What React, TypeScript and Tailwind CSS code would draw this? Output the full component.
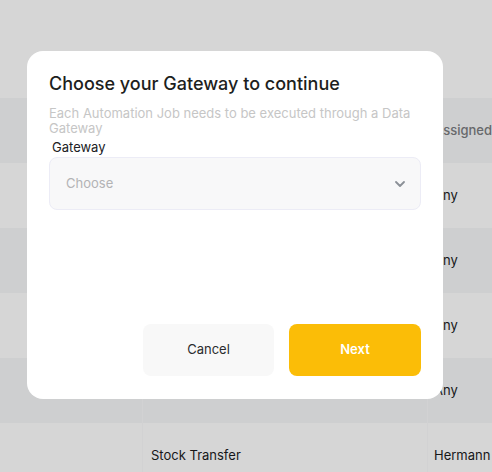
import { ChevronDown } from "lucide-react";

const rows = [
  { type: "", name: "", owner: "Any" },
  { type: "", name: "", owner: "Any" },
  { type: "", name: "", owner: "Any" },
  { type: "", name: "", owner: "Any" },
  { type: "", name: "Stock Transfer", owner: "Hermann" },
];

const App = () => {
  return (
    <div className="relative h-[472px] w-[492px] overflow-hidden bg-white font-['Inter',sans-serif]">
      {/* page behind */}
      <div className="h-[98px] w-full bg-white" />
      <div className="flex h-[65px] bg-[#f6f7f8] text-[13px] font-medium text-[#7b7d80]">
        <div className="w-[142px] shrink-0" />
        <div className="w-[285px] shrink-0 border-l border-[#fbfbfc]" />
        <div className="flex flex-1 items-center border-l border-[#fbfbfc] pl-[6px] whitespace-nowrap">
          Assigned
        </div>
      </div>
      {rows.map((r, i) => (
        <div
          key={i}
          className={
            i % 2 === 0
              ? "flex h-[65px] bg-white text-[13px] text-[#1b1c1e]"
              : "flex h-[65px] bg-[#f6f7f8] text-[13px] text-[#1b1c1e]"
          }
        >
          <div className="flex w-[142px] shrink-0 items-center pl-[9px]">{r.type}</div>
          <div className="flex w-[285px] shrink-0 items-center border-l border-[#fbfbfc] pl-[8px] whitespace-nowrap">
            {r.name}
          </div>
          <div className="flex flex-1 items-center border-l border-[#fbfbfc] pl-[6px] whitespace-nowrap">
            {r.owner}
          </div>
        </div>
      ))}

      {/* overlay */}
      <div className="absolute inset-0 bg-black/[0.16]" />

      {/* modal */}
      <div className="absolute left-[27px] top-[51px] flex h-[348px] w-[416px] flex-col rounded-[16px] bg-white px-[22px] pb-[23px] pt-[21px]">
        <h2 className="text-[18px] font-medium leading-[24px] text-[#1d1e20]">
          Choose your Gateway to continue
        </h2>
        <p className="mt-[10px] pr-[4px] text-[13px] leading-[15px] text-[#c6c6c6]">
          Each Automation Job needs to be executed through a Data Gateway
        </p>
        <label className="mt-[3px] pl-[3px] text-[13px] leading-[16px] text-[#202124]">
          Gateway
        </label>
        <div className="mt-[2px] flex h-[53px] items-center justify-between rounded-[8px] border border-[#ececf6] bg-[#f8f8f9] pl-[16px] pr-[12px]">
          <span className="text-[13px] text-[#b3b3b5]">Choose</span>
          <ChevronDown size={16} strokeWidth={2.75} className="text-[#8b9097]" />
        </div>
        <div className="mt-auto flex justify-end gap-[15px]">
          <button className="h-[52px] w-[131px] rounded-[8px] bg-[#f8f8f8] text-[13px] text-[#2b2c2e]">
            Cancel
          </button>
          <button className="h-[52px] w-[132px] rounded-[8px] bg-[#fbbd07] text-[13px] font-semibold text-white">
            Next
          </button>
        </div>
      </div>
    </div>
  );
};

export default App;
